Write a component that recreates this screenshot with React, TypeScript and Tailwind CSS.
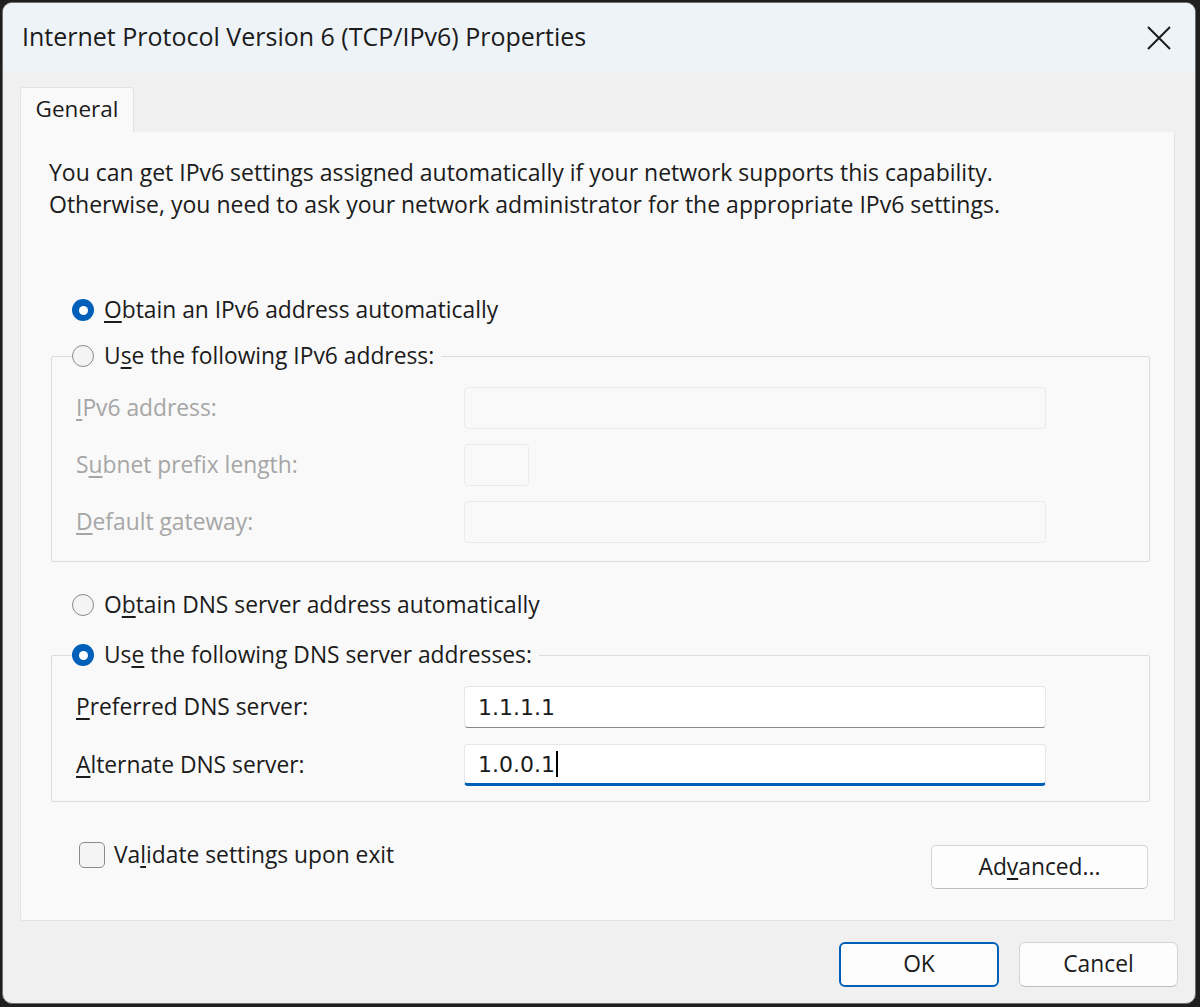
import React from "react";

function Radio({ checked }: { checked?: boolean }) {
  return checked ? (
    <span className="flex h-[22px] w-[22px] shrink-0 items-center justify-center rounded-full bg-[#005fb8]">
      <span className="h-[9px] w-[9px] rounded-full bg-white" />
    </span>
  ) : (
    <span className="h-[22px] w-[22px] shrink-0 rounded-full border-[1.5px] border-[#8a8a8a] bg-[#f4f4f4]" />
  );
}

function Field({ label, w, disabled, value, focused, caret }: { label: React.ReactNode; w: string; disabled?: boolean; value?: string; focused?: boolean; caret?: boolean }) {
  return (
    <div className="flex h-[42px] items-center">
      <div className={"w-[412px] pl-[24px] " + (disabled ? "text-[#a6a6a6]" : "text-[#1b1b1b]")}>{label}</div>
      {disabled ? (
        <div className={"h-[42px] rounded-[4px] border border-[#ebebeb] bg-[#f9f9f9] " + w} />
      ) : (
        <div
          className={
            "flex h-[42px] items-center rounded-[4px] border border-[#e6e6e6] bg-white pl-[13px] font-['DejaVu_Sans',sans-serif] text-[22px] text-[#1b1b1b] " +
            w +
            (focused ? " border-b-[3px] border-b-[#005fb8]" : " border-b-[#8a8a8a]")
          }
        >
          <span>{value}</span>
          {caret && <span className="ml-[1px] h-[26px] w-[2px] bg-black" />}
        </div>
      )}
    </div>
  );
}

export default function App() {
  return (
    <div className="h-[1007px] w-[1200px] bg-[#1f1f1f] pl-[2px] pt-[2px] font-['Open_Sans',sans-serif] text-[22.8px]">
      <div className="flex h-[1002px] w-[1194px] flex-col overflow-hidden rounded-[10px] border border-[#6e6e6e] bg-[#f0f0f0]">
        {/* Title bar */}
        <div className="flex h-[68px] shrink-0 items-center justify-between bg-[#eef3f8] pl-[19px] pr-[23px]">
          <div className="text-[25px] text-[#1b1b1b]">Internet Protocol Version 6 (TCP/IPv6) Properties</div>
          <svg width="26" height="26" viewBox="0 0 26 26" className="mt-[2px]">
            <path d="M2 2 L24 24 M24 2 L2 24" stroke="#1b1b1b" strokeWidth="2" />
          </svg>
        </div>
        <div className="flex flex-col pl-[17px] pr-[20px]">
          {/* Tabs */}
          <div className="mt-[16px] flex">
            <div className="flex h-[45px] w-[114px] items-center justify-center rounded-t-[3px] border border-b-0 border-[#e3e3e3] bg-[#f9f9f9] pb-[3px] text-[22.5px] text-[#1b1b1b]">
              General
            </div>
          </div>
          {/* Panel */}
          <div className="flex h-[789px] flex-col rounded-b-[3px] border border-t-0 border-[#e3e3e3] bg-[#f9f9f9] pl-[28px] pr-[26px] pt-[24px] text-[#1b1b1b]">
            <p className="text-[23px] leading-[32px]">
              You can get IPv6 settings assigned automatically if your network supports this capability.
              <br />
              Otherwise, you need to ask your network administrator for the appropriate IPv6 settings.
            </p>

            <div className="ml-[23px] mt-[75px] flex h-[30px] items-center gap-[10px]">
              <Radio checked />
              <span>
                <u className="underline-offset-[3px]">O</u>btain an IPv6 address automatically
              </span>
            </div>

            <fieldset className="ml-[2px] mt-[16px] w-[1099px] rounded-[2px] border border-[#dcdcdc] px-0 pb-[18px]">
              <legend className="ml-[20px] flex h-[30px] items-center gap-[10px] pr-[7px]">
                <Radio />
                <span>
                  U<u className="underline-offset-[3px]">s</u>e the following IPv6 address:
                </span>
              </legend>
              <div className="flex flex-col gap-[15px] pt-[16px]">
                <Field disabled w="w-[582px]" label={<><u className="underline-offset-[3px]">I</u>Pv6 address:</>} />
                <Field disabled w="w-[65px]" label={<>S<u className="underline-offset-[3px]">u</u>bnet prefix length:</>} />
                <Field disabled w="w-[582px]" label={<><u className="underline-offset-[3px]">D</u>efault gateway:</>} />
              </div>
            </fieldset>

            <div className="ml-[23px] mt-[28px] flex h-[30px] items-center gap-[10px]">
              <Radio />
              <span>
                O<u className="underline-offset-[3px]">b</u>tain DNS server address automatically
              </span>
            </div>

            <fieldset className="ml-[2px] mt-[20px] w-[1099px] rounded-[2px] border border-[#dcdcdc] px-0 pb-[15px]">
              <legend className="ml-[20px] flex h-[30px] items-center gap-[10px] pr-[7px]">
                <Radio checked />
                <span>
                  Us<u className="underline-offset-[3px]">e</u> the following DNS server addresses:
                </span>
              </legend>
              <div className="flex flex-col gap-[16px] pt-[16px]">
                <Field w="w-[582px]" value="1.1.1.1" label={<><u className="underline-offset-[3px]">P</u>referred DNS server:</>} />
                <Field w="w-[582px]" value="1.0.0.1" focused caret label={<><u className="underline-offset-[3px]">A</u>lternate DNS server:</>} />
              </div>
            </fieldset>

            <div className="mt-[38px] flex items-start justify-between">
              <div className="ml-[30px] flex h-[30px] items-center gap-[9px]">
                <span className="h-[26px] w-[26px] rounded-[5px] border-[1.5px] border-[#8a8a8a] bg-[#f4f4f4]" />
                <span>
                  Va<u className="underline-offset-[3px]">l</u>idate settings upon exit
                </span>
              </div>
              <button className="mt-[5px] flex h-[44px] w-[217px] items-center justify-center rounded-[5px] border border-[#d4d4d4] border-b-[#bdbdbd] bg-[#fdfdfd] text-[#1b1b1b]">
                <span>
                  Ad<u className="underline-offset-[3px]">v</u>anced...
                </span>
              </button>
            </div>
          </div>

          {/* Buttons */}
          <div className="mt-[21px] flex justify-end gap-[20px]">
            <button className="flex h-[45px] w-[160px] items-center justify-center rounded-[6px] border-2 border-[#005fb8] bg-[#fdfdfd] text-[#1b1b1b]">
              OK
            </button>
            <button className="mr-[-3px] flex h-[45px] w-[159px] items-center justify-center rounded-[6px] border border-[#d4d4d4] border-b-[#bdbdbd] bg-[#fdfdfd] text-[#1b1b1b]">
              Cancel
            </button>
          </div>
        </div>
      </div>
    </div>
  );
}
